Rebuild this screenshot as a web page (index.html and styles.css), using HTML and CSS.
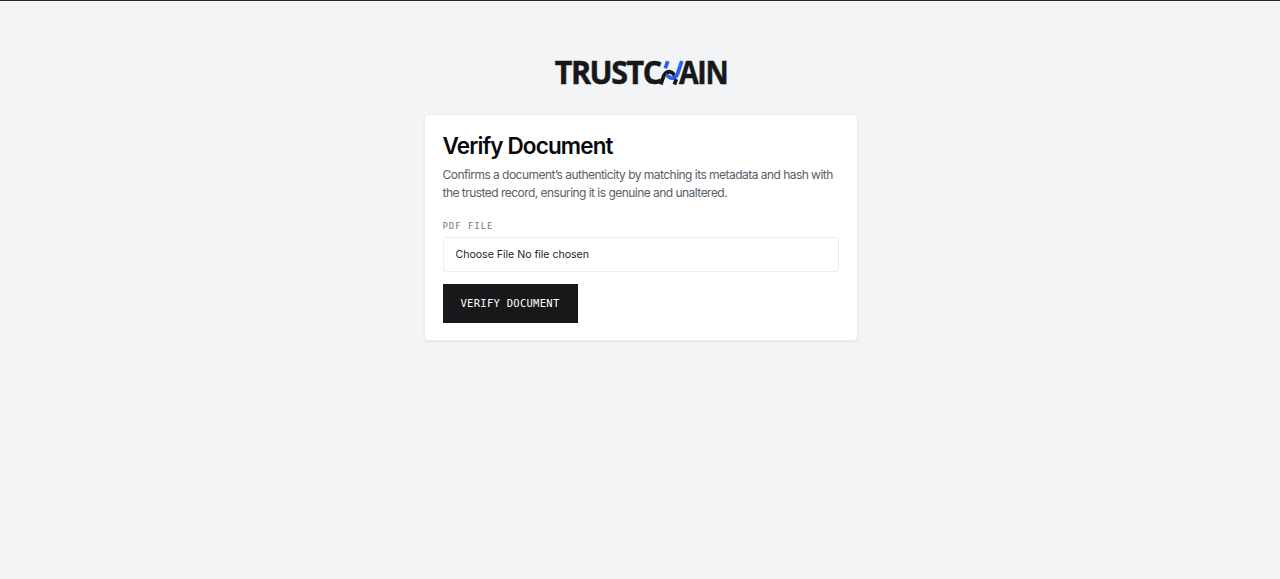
FILE: index.html
```
<!DOCTYPE html>
<html lang="en">

<head>
    <meta charset="UTF-8">
    <title>TrustChain - Verify Document</title>
    <link rel="stylesheet" href="styles.css">
</head>

<body>
<main class="page">
    <svg class="logo" width="181" height="48" viewBox="-4 -12 181 48" role="img" aria-label="TrustChain">
        <text class="logo__text" x="0.7" y="24.2" textLength="106" lengthAdjust="spacingAndGlyphs">TRUSTC</text>
        <text class="logo__text" x="125" y="24.2" textLength="48.3" lengthAdjust="spacingAndGlyphs">AIN</text>
        <!-- chain links in place of the H -->
        <path class="logo__link logo__link--blue" d="M113.8 1.2L111.3 8.3" />
        <path class="logo__link logo__link--dark" d="M106.8 24.5L109.3 17.2C111 12.7 113.8 11 117.3 12.2C119 13 119 14.3 120.8 14.8" />
        <path class="logo__link logo__link--blue" d="M112.3 15.3C114.8 15.3 114.8 18.2 118.3 18.2C121.3 18.2 122.6 16.7 123.6 13.7L127.8 1.2" />
        <path class="logo__link logo__link--dark" d="M122.3 19.2L120.4 24.5" />
    </svg>

    <section class="card">
        <h1 class="card__title">Verify Document</h1>
        <p class="card__text">Confirms a document’s authenticity by matching its metadata and hash with the trusted record, ensuring it is genuine and unaltered.</p>

        <form class="form">
            <label class="form__label" for="pdfFile">PDF FILE</label>
            <input class="form__file" type="file" id="pdfFile" name="file" accept="application/pdf" />
            <button class="form__button" type="submit">VERIFY DOCUMENT</button>
        </form>
    </section>
</main>
</body>

</html>
```
FILE: styles.css
```
* {
  box-sizing: border-box;
}

body {
  margin: 0;
  min-height: 100vh;
  font-family: Inter, sans-serif;
  background-color: #F2F4F6;
  border-top: 1px solid #29262B;
}

.page {
  display: flex;
  flex-direction: column;
  align-items: center;
  padding: 47px 0 0 1px;
}

.logo {
  display: block;
  margin-bottom: 18px;
}

.logo__text {
  font-family: "Open Sans", sans-serif;
  font-size: 31.5px;
  font-weight: 700;
  letter-spacing: -1.5px;
  fill: #18181A;
  stroke: #18181A;
  stroke-width: 0.5px;
}

.logo__link {
  fill: none;
  stroke-width: 3.8;
}

.logo__link--blue {
  stroke: #2C62EE;
}

.logo__link--dark {
  stroke: #18181A;
}

.card {
  width: 434px;
  height: 227px;
  padding: 18px;
  background-color: #FFFFFF;
  border: 1px solid #ECEDEF;
  border-radius: 4px;
  box-shadow: 0 1px 2px rgba(0, 0, 0, 0.08);
}

.card__title {
  margin: 0;
  font-size: 22.5px;
  font-weight: 600;
  line-height: 25px;
  letter-spacing: -0.87px;
  color: #09090B;
}

.card__text {
  margin: 8px 0 0;
  font-size: 12px;
  line-height: 18px;
  letter-spacing: -0.53px;
  color: #56616C;
}

.form {
  display: flex;
  flex-direction: column;
  align-items: flex-start;
  margin-top: 18px;
}

.form__label {
  font-family: "DejaVu Sans Mono", monospace;
  font-size: 9px;
  line-height: 12px;
  letter-spacing: 0.95px;
  color: #74777B;
}

.form__file {
  width: 396px;
  height: 35px;
  margin-top: 5px;
  padding: 9px 12px;
  font-family: Inter, sans-serif;
  font-size: 10.6px;
  line-height: 15px;
  letter-spacing: -0.03px;
  color: #27272A;
  border: 1px solid #ECECEE;
  border-radius: 3px;
}

.form__file::file-selector-button {
  margin: 0 3px 0 0;
  padding: 0;
  font: inherit;
  letter-spacing: inherit;
  color: inherit;
  background: none;
  border: none;
}

.form__button {
  width: 135px;
  height: 39px;
  margin-top: 12px;
  padding: 0 0 1px;
  font-family: "DejaVu Sans Mono", monospace;
  font-size: 10.5px;
  letter-spacing: 0.28px;
  color: #FFFFFF;
  background-color: #18181A;
  border: none;
}
```
